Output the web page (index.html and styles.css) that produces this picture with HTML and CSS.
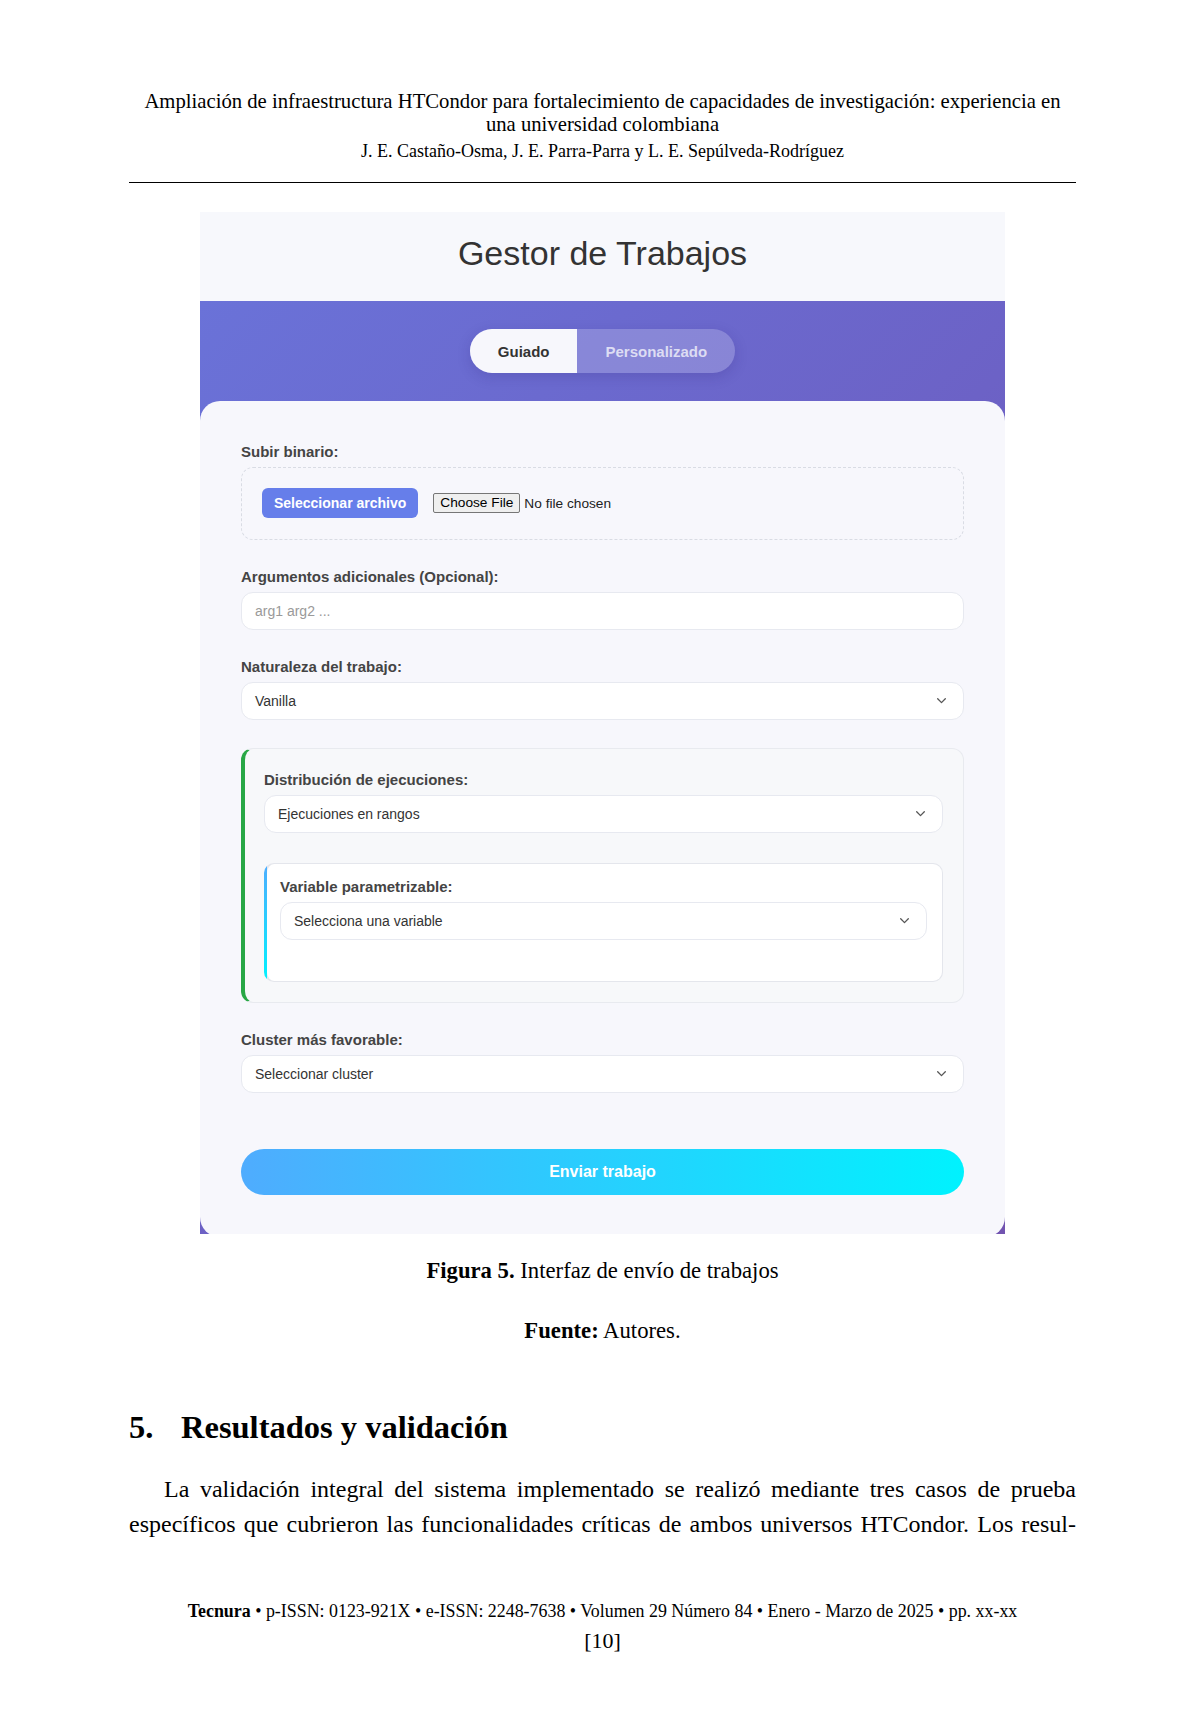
FILE: index.html
```html
<!DOCTYPE html>
<html lang="es">
<head>
<meta charset="utf-8">
<title>Gestor de Trabajos</title>
<link rel="stylesheet" href="styles.css">
</head>
<body>
<div class="page">
  <header class="running-head">
    <p class="rh-title">Ampliación de infraestructura HTCondor para fortalecimiento de capacidades de investigación: experiencia en<br>una universidad colombiana</p>
    <p class="rh-authors">J. E. Castaño-Osma, J. E. Parra-Parra y L. E. Sepúlveda-Rodríguez</p>
  </header>
  <hr class="rule">

  <figure class="fig">
    <div class="shot">
      <div class="app-header"><h1 class="app-title">Gestor de Trabajos</h1></div>
      <div class="app-body">
        <div class="tabs-row">
          <div class="tabs">
            <span class="tab active">Guiado</span>
            <span class="tab">Personalizado</span>
          </div>
        </div>
        <div class="card">
          <div class="group">
            <span class="label">Subir binario:</span>
            <div class="dropzone">
              <span class="pick-btn">Seleccionar archivo</span>
              <span class="native"><span class="native-btn">Choose File</span><span>No file chosen</span></span>
            </div>
          </div>
          <div class="group">
            <span class="label">Argumentos adicionales (Opcional):</span>
            <div class="field"><span class="placeholder">arg1 arg2 ...</span></div>
          </div>
          <div class="group">
            <span class="label">Naturaleza del trabajo:</span>
            <div class="field"><span>Vanilla</span><svg class="chev" width="9" height="6" viewBox="0 0 9 6"><path d="M0.7 0.8 L4.5 4.6 L8.3 0.8"/></svg></div>
          </div>
          <div class="group dist">
            <span class="label">Distribución de ejecuciones:</span>
            <div class="field"><span>Ejecuciones en rangos</span><svg class="chev" width="9" height="6" viewBox="0 0 9 6"><path d="M0.7 0.8 L4.5 4.6 L8.3 0.8"/></svg></div>
            <div class="param">
              <span class="label">Variable parametrizable:</span>
              <div class="field"><span>Selecciona una variable</span><svg class="chev" width="9" height="6" viewBox="0 0 9 6"><path d="M0.7 0.8 L4.5 4.6 L8.3 0.8"/></svg></div>
            </div>
          </div>
          <div class="group">
            <span class="label">Cluster más favorable:</span>
            <div class="field"><span>Seleccionar cluster</span><svg class="chev" width="9" height="6" viewBox="0 0 9 6"><path d="M0.7 0.8 L4.5 4.6 L8.3 0.8"/></svg></div>
          </div>
          <div class="submit">Enviar trabajo</div>
        </div>
      </div>
    </div>
    <figcaption class="fig-caption"><b>Figura 5.</b> Interfaz de envío de trabajos</figcaption>
    <p class="fig-source"><b>Fuente:</b> Autores.</p>
  </figure>

  <h2 class="section"><span class="num">5.</span>Resultados y validación</h2>
  <p class="body-text">
    <span class="ln first">La validación integral del sistema implementado se realizó mediante tres casos de prueba</span>
    <span class="ln">específicos que cubrieron las funcionalidades críticas de ambos universos HTCondor. Los resul-</span>
  </p>

  <footer class="page-foot">
    <p class="foot-line"><b>Tecnura</b> • p-ISSN: 0123-921X • e-ISSN: 2248-7638 • Volumen 29 Número 84 • Enero - Marzo de 2025 • pp. xx-xx</p>
    <p class="page-num">[10]</p>
  </footer>
</div>
</body>
</html>
```
FILE: styles.css
```css
html, body {
  margin: 0;
  padding: 0;
  background: #ffffff;
}

.page {
  width: 947px;
  margin-left: 129px;
  padding-top: 90px;
  font-family: "Liberation Serif", "Times New Roman", serif;
  color: #000;
}

.rh-title {
  margin: 0;
  font-size: 20.7px;
  line-height: 23px;
  text-align: center;
}

.rh-authors {
  margin: 2px 0 0;
  font-size: 18px;
  line-height: 26px;
  text-align: center;
}

.rule {
  margin: 18px 0 0;
  border: 0;
  border-top: 1px solid #000;
  height: 0;
}

.fig {
  margin: 29px 0 0;
}

/* ---------- screenshot of the app ---------- */
.shot {
  width: 805px;
  height: 1022px;
  margin: 0 auto;
  overflow: hidden;
  background: #f7f8fc;
  font-family: "Liberation Sans", Arial, sans-serif;
}

.app-header {
  height: 89px;
  box-sizing: border-box;
  padding-top: 21px;
  text-align: center;
}

.app-title {
  margin: 0;
  font-size: 34px;
  line-height: 40px;
  font-weight: 400;
  color: #333;
}

.app-body {
  background: linear-gradient(135deg, #6a72d8 0%, #6c62c6 50%, #7254b0 100%);
  padding-top: 28px;
}

.tabs-row {
  display: flex;
  justify-content: center;
  margin-bottom: 28px;
}

.tabs {
  display: flex;
  border-radius: 22px;
  overflow: hidden;
  background: rgba(255, 255, 255, 0.2);
  box-shadow: 0 4px 14px rgba(40, 30, 110, 0.18);
}

.tab {
  height: 44px;
  padding: 0 28px;
  display: flex;
  align-items: center;
  font-size: 15px;
  font-weight: 700;
  color: rgba(255, 255, 255, 0.72);
}

.tab.active {
  background: #f7f7fc;
  color: #333;
}

.card {
  background: #f7f7fc;
  border-radius: 20px;
  padding: 42px 41px 42px;
}

.group {
  margin-bottom: 28px;
}

.label {
  display: block;
  font-size: 15px;
  line-height: 18px;
  font-weight: 700;
  color: #444;
  margin-bottom: 6px;
}

.dropzone {
  border: 1px dashed #d9dce4;
  border-radius: 12px;
  padding: 20px 20px 21px;
  display: flex;
  align-items: center;
}

.pick-btn {
  height: 30px;
  padding: 0 12px;
  display: flex;
  align-items: center;
  background: #667eea;
  color: #fff;
  font-size: 14px;
  font-weight: 700;
  border-radius: 6px;
}

.native {
  margin-left: 15px;
  display: flex;
  align-items: center;
  gap: 4px;
  font-size: 13.7px;
  color: #222;
}

.native-btn {
  background: #efefef;
  border: 1px solid #767676;
  border-radius: 2px;
  padding: 1px 6px;
  line-height: 16px;
  color: #000;
}

.field {
  height: 38px;
  box-sizing: border-box;
  background: #fff;
  border: 1px solid #e7e9f0;
  border-radius: 12px;
  padding: 0 17px 0 13px;
  display: flex;
  align-items: center;
  justify-content: space-between;
  font-size: 14px;
  color: #333;
}

.placeholder {
  color: #9a9a9a;
}

.chev path {
  fill: none;
  stroke: #555;
  stroke-width: 1.3;
  stroke-linecap: round;
  stroke-linejoin: round;
}

.dist {
  border: 1px solid #e8eaef;
  border-left: 4px solid #28a745;
  border-radius: 12px;
  padding: 22px 20px 20px 19px;
  background: #f7f8fa;
}

.param {
  margin-top: 30px;
  border: 1px solid transparent;
  border-left: 3px solid transparent;
  border-radius: 10px;
  padding: 14px 15px 41px 13px;
  background:
    linear-gradient(#fff, #fff) padding-box,
    linear-gradient(180deg, #4facfe, #00f2fe) left top / 3px 100% no-repeat border-box,
    linear-gradient(#e4e6ec, #e4e6ec) border-box;
}

.submit {
  margin-top: 56px;
  height: 46px;
  border-radius: 23px;
  background: linear-gradient(90deg, #4facfe 0%, #00f2fe 100%);
  color: #fff;
  font-size: 16px;
  font-weight: 700;
  display: flex;
  align-items: center;
  justify-content: center;
}

/* ---------- caption & article text ---------- */
.fig-caption {
  margin-top: 23px;
  font-size: 22.7px;
  line-height: 28px;
  text-align: center;
}

.fig-source {
  margin: 32px 0 0;
  font-size: 22.7px;
  line-height: 28px;
  text-align: center;
}

.section {
  margin: 63px 0 0;
  font-size: 32.5px;
  line-height: 38px;
  font-weight: 700;
}

.num {
  display: inline-block;
  width: 52px;
}

.body-text {
  margin: 26px 0 0;
  font-size: 24px;
  line-height: 35px;
}

.ln {
  display: block;
  text-align: justify;
  text-align-last: justify;
}

.ln.first {
  padding-left: 35px;
}

.page-foot {
  margin-top: 58px;
  text-align: center;
}

.foot-line {
  margin: 0;
  font-size: 17.9px;
  line-height: 22px;
}

.page-num {
  margin: 6px 0 0;
  font-size: 22px;
  line-height: 26px;
}
```
